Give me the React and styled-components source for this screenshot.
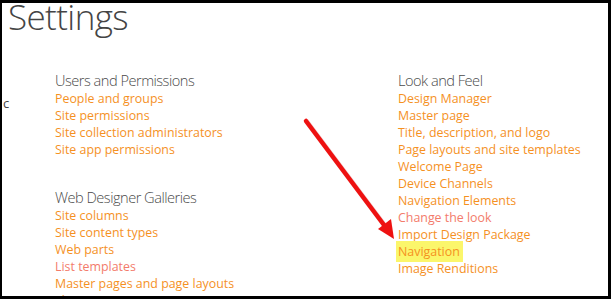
import React from 'react';
import styled, { createGlobalStyle } from 'styled-components';

const GlobalStyle = createGlobalStyle`
    html, body {
        margin: 0;
        padding: 0;
        background: #fff;
    }
    * {
        box-sizing: border-box;
    }
`;

const sections = {
    left: [
        {
            title: 'Users and Permissions',
            links: [
                { label: 'People and groups' },
                { label: 'Site permissions' },
                { label: 'Site collection administrators' },
                { label: 'Site app permissions' },
            ],
        },
        {
            title: 'Web Designer Galleries',
            links: [
                { label: 'Site columns' },
                { label: 'Site content types' },
                { label: 'Web parts' },
                { label: 'List templates', visited: true },
                { label: 'Master pages and page layouts' },
                { label: 'Themes' },
            ],
        },
    ],
    right: [
        {
            title: 'Look and Feel',
            links: [
                { label: 'Design Manager' },
                { label: 'Master page' },
                { label: 'Title, description, and logo' },
                { label: 'Page layouts and site templates' },
                { label: 'Welcome Page' },
                { label: 'Device Channels' },
                { label: 'Navigation Elements' },
                { label: 'Change the look', visited: true },
                { label: 'Import Design Package' },
                { label: 'Navigation', highlight: true },
                { label: 'Image Renditions' },
            ],
        },
    ],
};

const Section = ({ title, links }) => (
    <Group>
        <Heading>{title}</Heading>
        {links.map((l) => (
            <LinkRow key={l.label}>
                <Link $visited={l.visited} $highlight={l.highlight}>
                    {l.label}
                </Link>
            </LinkRow>
        ))}
    </Group>
);

const Arrow = () => (
    <ArrowSvg width="611" height="299" viewBox="0 0 611 299">
        <line x1="307" y1="122" x2="385" y2="226" stroke="#b33" strokeOpacity="0.25" strokeWidth="5" strokeLinecap="round" />
        <line x1="306" y1="121" x2="384" y2="225" stroke="#ee1111" strokeWidth="4.5" strokeLinecap="round" />
        <polygon points="394,239 378,229 391,219" fill="#ee1111" />
    </ArrowSvg>
);

const App = () => (
    <Frame>
        <GlobalStyle />
        <Title>Settings</Title>
        <Body>
            <NavStub>
                <StubText>c</StubText>
            </NavStub>
            <Column>
                {sections.left.map((s) => (
                    <Section key={s.title} {...s} />
                ))}
            </Column>
            <Column>
                {sections.right.map((s) => (
                    <Section key={s.title} {...s} />
                ))}
            </Column>
        </Body>
        <Arrow />
    </Frame>
);

export default App;

const Frame = styled.div`
    position: relative;
    width: 611px;
    height: 299px;
    overflow: hidden;
    background: #fff;
    border-style: solid;
    border-color: #000;
    border-width: 3px 3px 3px 2px;
    font-family: 'Open Sans', 'Noto Sans', sans-serif;
`;

const Title = styled.h1`
    margin: -4px 0 0 6px;
    font-size: 35px;
    line-height: 36px;
    font-weight: 300;
    color: #444;
    letter-spacing: -0.6px;
`;

const Body = styled.div`
    display: grid;
    grid-template-columns: 53px 343px 1fr;
    margin-top: 37px;
`;

const NavStub = styled.div`
    overflow: hidden;
    padding-top: 23px;
`;

const StubText = styled.span`
    display: block;
    padding-left: 1px;
    font-size: 13px;
    line-height: 17px;
    color: #444;
`;

const Column = styled.div`
    display: flex;
    flex-direction: column;
    gap: 31px;
`;

const Group = styled.div`
    display: flex;
    flex-direction: column;
`;

const Heading = styled.h2`
    margin: 0 0 1px;
    font-size: 14.6px;
    line-height: 17px;
    font-weight: 300;
    color: #4a4a4a;
    letter-spacing: -0.5px;
    white-space: nowrap;
`;

const LinkRow = styled.div`
    font-size: 12.4px;
    line-height: 17px;
    white-space: nowrap;
`;

const Link = styled.span`
    color: ${(p) => (p.$visited ? '#f37b6b' : '#f5911f')};
    cursor: pointer;
    ${(p) =>
        p.$highlight &&
        `
        background: #fbf66b;
        padding: 2px 3px 2px 2px;
        margin-left: -2px;
    `}

    &:hover {
        text-decoration: underline;
    }
`;

const ArrowSvg = styled.svg`
    position: absolute;
    left: -2px;
    top: -3px;
    pointer-events: none;
`;
